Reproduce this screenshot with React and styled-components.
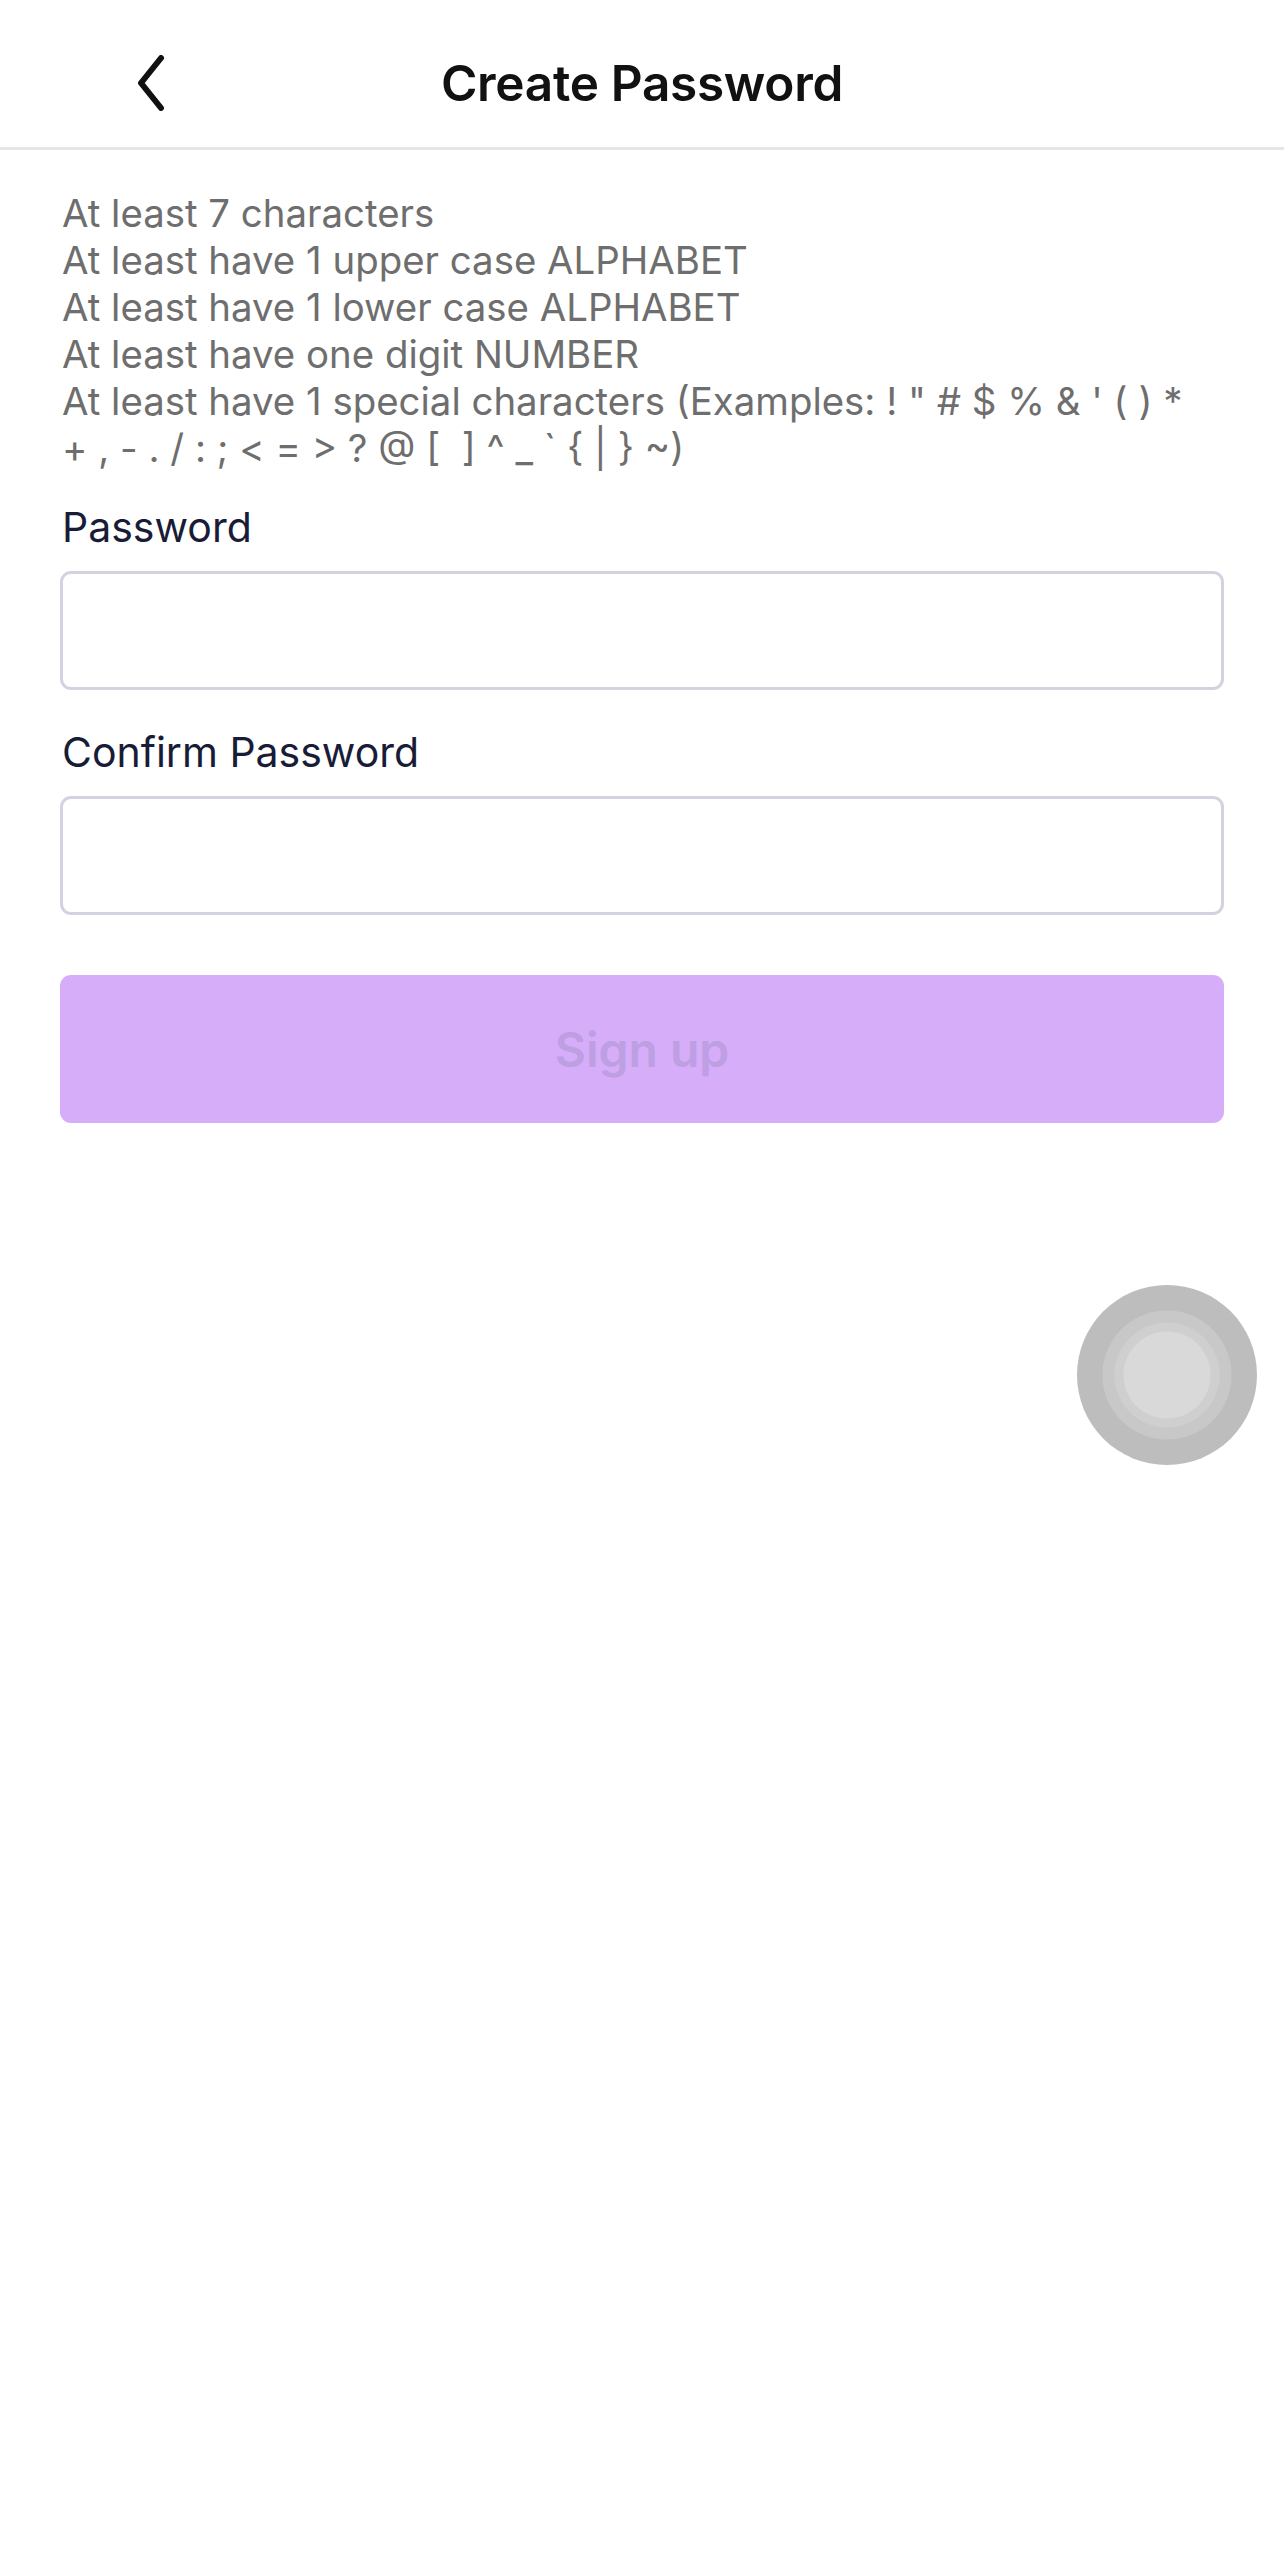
import React from 'react'
import styled, { createGlobalStyle } from 'styled-components'

const GlobalStyle = createGlobalStyle`
  html, body {
    margin: 0;
    padding: 0;
    background: #ffffff;
  }
  body {
    font-family: Inter, "Noto Sans", "Liberation Sans", sans-serif;
    -webkit-font-smoothing: antialiased;
  }
  * {
    box-sizing: border-box;
  }
`

const Screen = styled.div`
  position: relative;
  width: 1284px;
  min-height: 2552px;
  background: #ffffff;
`

const Header = styled.header`
  height: 150px;
  padding-top: 18px;
  display: grid;
  grid-template-columns: 1fr auto 1fr;
  align-items: center;
  border-bottom: 3px solid #e6e6e6;
`

const BackButton = styled.button`
  justify-self: start;
  margin-left: 132px;
  padding: 4px;
  border: none;
  background: none;
  display: flex;
  align-items: center;
  cursor: pointer;
`

const Title = styled.h1`
  margin: 0;
  font-size: 49.5px;
  font-weight: 600;
  color: #111111;
  letter-spacing: -0.3px;
`

const Content = styled.main`
  padding: 40px 60px 0 62px;
  display: flex;
  flex-direction: column;
`

const Rules = styled.div`
  font-size: 38.4px;
  line-height: 47px;
  color: #6e6e6e;
  font-weight: 400;
  margin-bottom: 30px;
`

const Rule = styled.div`
  white-space: pre;
`

const Label = styled.label`
  display: block;
  font-size: 41px;
  line-height: 50px;
  color: #181c36;
  margin-bottom: ${p => p.$gap || 19}px;
`

const Field = styled.input`
  width: 1164px;
  margin-left: -2px;
  height: 119px;
  border: 3px solid #d2d3e1;
  border-radius: 11px;
  background: #ffffff;
  font-size: 40px;
  padding: 0 24px;
  outline: none;
  margin-bottom: ${p => p.$after}px;
`

const SubmitButton = styled.button`
  width: 1164px;
  margin-left: -2px;
  height: 148px;
  border: none;
  border-radius: 11px;
  background: #d6adf9;
  color: #bd9fe2;
  font-family: Inter, "Noto Sans", sans-serif;
  font-size: 48px;
  font-weight: 600;
  cursor: default;
`

const AssistiveTouch = styled.div`
  position: absolute;
  left: 1077px;
  top: 1285px;
  width: 180px;
  height: 180px;
  border-radius: 50%;
  background: radial-gradient(
    circle at center,
    #d9d9d9 0 43px,
    #cfcfcf 44px 52px,
    #c8c8c8 53px 64px,
    #bdbdbd 65px 90px
  );
`

function ChevronLeft() {
  return (
    <svg width="30" height="56" viewBox="0 0 30 56" fill="none">
      <polyline
        points="25,3 5,28 25,53"
        stroke="#111111"
        strokeWidth="6"
        strokeLinecap="round"
        strokeLinejoin="round"
      />
    </svg>
  )
}

export default function App() {
  const rules = [
    'At least 7 characters',
    'At least have 1 upper case ALPHABET',
    'At least have 1 lower case ALPHABET',
    'At least have one digit NUMBER',
    'At least have 1 special characters (Examples: ! " # $ % & \' ( ) *',
    '+ , - . / : ; < = > ? @ [  ] ^ _ ` { | } ~)',
  ]

  return (
    <>
      <GlobalStyle />
      <Screen>
        <Header>
          <BackButton aria-label="Back">
            <ChevronLeft />
          </BackButton>
          <Title>Create Password</Title>
          <div />
        </Header>
        <Content>
          <Rules>
            {rules.map((r, i) => (
              <Rule key={i}>{r}</Rule>
            ))}
          </Rules>
          <Label htmlFor="pw">Password</Label>
          <Field id="pw" type="password" $after={37} />
          <Label htmlFor="pw2">Confirm Password</Label>
          <Field id="pw2" type="password" $after={60} />
          <SubmitButton disabled>Sign up</SubmitButton>
        </Content>
        <AssistiveTouch />
      </Screen>
    </>
  )
}
